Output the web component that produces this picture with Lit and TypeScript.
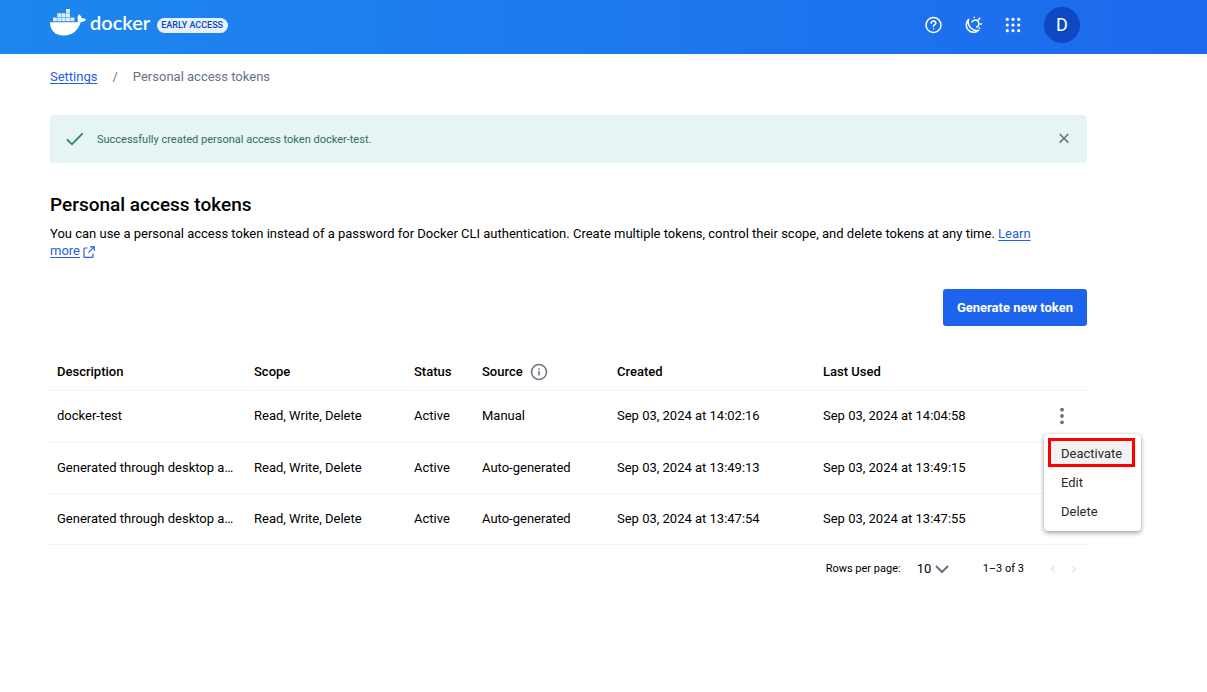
import { LitElement, html, svg, css } from "lit";
import { customElement, state, property } from "lit/decorators.js";

interface Token {
  description: string;
  source: string;
  created: string;
  lastUsed: string;
}

const TOKENS: Token[] = [
  { description: "docker-test", source: "Manual", created: "Sep 03, 2024 at 14:02:16", lastUsed: "Sep 03, 2024 at 14:04:58" },
  { description: "Generated through desktop auth", source: "Auto-generated", created: "Sep 03, 2024 at 13:49:13", lastUsed: "Sep 03, 2024 at 13:49:15" },
  { description: "Generated through desktop auth", source: "Auto-generated", created: "Sep 03, 2024 at 13:47:54", lastUsed: "Sep 03, 2024 at 13:47:55" },
];

const GRID = [4.3, 10, 15.7];

const reset = css`
  * { box-sizing: border-box; }
  button {
    font: inherit;
    color: inherit;
    background: none;
    border: 0;
    padding: 0;
    margin: 0;
    cursor: pointer;
  }
  svg { display: block; }
`;

@customElement("top-bar")
export class TopBar extends LitElement {
  static styles = [
    reset,
    css`
      :host { display: block; }
      .bar {
        display: flex;
        align-items: center;
        justify-content: space-between;
        height: 54px;
        padding: 0 127px 4px 50px;
        color: #fff;
        background: linear-gradient(90deg, #1d87ee 0%, #1d6aed 100%);
      }
      .brand { display: flex; align-items: center; }
      .home {
        display: flex;
        align-items: center;
        gap: 4px;
        color: #fff;
        text-decoration: none;
      }
      .whale { margin-bottom: 6px; }
      .word {
        font: 600 20px/24px Lato, sans-serif;
        margin-bottom: 6px;
      }
      .badge {
        margin-left: 7px;
        padding: 0 5px 0 4px;
        border-radius: 8px;
        background: #e5f2fc;
        color: #0b47bd;
        font-size: 9px;
        font-weight: 500;
        line-height: 15px;
      }
      .actions { display: flex; align-items: center; }
      .icon { margin-right: 20px; }
      .avatar {
        width: 36px;
        height: 36px;
        margin-left: 1px;
        border-radius: 50%;
        background: #0c49c2;
        font-size: 18px;
        line-height: 36px;
        text-align: center;
      }
    `,
  ];

  render() {
    return html`
      <header class="bar">
        <div class="brand">
          <a class="home" href="#" aria-label="docker">
            <svg class="whale" width="36" height="27" viewBox="0 0 36 27" fill="#fff">
              <path d="M0 13.300h25.400c1.200 0 2.300-.3 3-.8-1.200-1.900-1.300-4.900.4-7.300 1.600.9 2.700 2.300 2.900 4.200 1.500-.2 3.100 0 4.300.8-.9 1.900-2.700 2.800-5.100 2.800C27.900 21.500 22.200 26.500 14.300 26.500h-.9C5 26.500 0 21.300 0 13.300Z" />
              <path d="M16 0h4v3.800h-4zM7.300 4.200h4v3.800h-4zM11.700 4.200h3.900v3.800h-3.900zM16 4.200h4v3.800h-4zM3 8.400h3.900v3.800H3zM7.300 8.400h4v3.800h-4zM11.700 8.400h3.900v3.800h-3.900zM16 8.400h4v3.800h-4zM20.400 8.400h4v3.800h-4z" opacity=".85" />
            </svg>
            <span class="word">docker</span>
          </a>
          <span class="badge">EARLY ACCESS</span>
        </div>
        <div class="actions">
          <button class="icon" aria-label="Help">
            <svg width="20" height="20" viewBox="0 0 20 20" fill="none" stroke="#fff" stroke-width="1.500" stroke-linecap="round">
              <circle cx="10.500" cy="10" r="7.500" />
              <path d="M8.200 8.200c0-1.400 1-2.200 2.300-2.200s2.300.8 2.300 2.100c0 1.600-2.300 1.600-2.300 3.100" />
              <path d="M10.500 13.700v.1" />
            </svg>
          </button>
          <button class="icon" aria-label="Toggle theme">
            <svg width="20" height="20" viewBox="0 0 20 20" fill="none" stroke="#fff" stroke-width="1.500" stroke-linecap="round" stroke-linejoin="round">
              <path d="M5.600 4.400A7.300 7.300 0 1 0 15.900 15.300 8.700 8.700 0 0 1 5.600 4.400Z" />
              <path d="M9 6.900a3.700 3.700 0 1 1 4.700 5.200M11.200 2.300v.3M15.500 4.600l1.200-1.200M17.500 9h1M16.200 13l.4.300" />
            </svg>
          </button>
          <button class="icon" aria-label="Apps">
            <svg width="20" height="20" viewBox="0 0 20 20" fill="#fff">
              ${GRID.map((y) => GRID.map((x) => svg`<circle cx=${x} cy=${y} r="1.600" />`))}
            </svg>
          </button>
          <button class="avatar" aria-label="Account">D</button>
        </div>
      </header>
    `;
  }
}

@customElement("row-menu")
export class RowMenu extends LitElement {
  @property({ type: Boolean }) open = false;

  static styles = [
    reset,
    css`
      :host { display: block; position: relative; }
      .dots {
        display: flex;
        align-items: center;
        justify-content: center;
        width: 100%;
        height: 51px;
      }
      .menu {
        position: absolute;
        z-index: 1;
        top: 43px;
        left: 8px;
        width: 97px;
        padding: 5px;
        border-radius: 4px;
        background: #fff;
        box-shadow: 0 2px 5px rgba(0, 0, 0, 0.35), 0 0 2px rgba(0, 0, 0, 0.15);
      }
      .item {
        display: block;
        width: 100%;
        height: 29px;
        padding: 0 12px;
        border-radius: 3px;
        line-height: 29px;
        text-align: left;
        color: #2b2b2b;
      }
      .item.current { background: #f2f2f2; }
      .mark {
        position: absolute;
        top: 4px;
        left: 4px;
        right: 6px;
        height: 29px;
        border: 3px solid #f00;
        pointer-events: none;
      }
    `,
  ];

  render() {
    return html`
      <button class="dots" aria-label="Token actions" @click=${() => (this.open = !this.open)}>
        <svg width="6" height="18" viewBox="0 0 6 18" fill="#677285">
          <circle cx="3" cy="2.700" r="1.900" /><circle cx="3" cy="9" r="1.900" /><circle cx="3" cy="15.300" r="1.900" />
        </svg>
      </button>
      ${this.open
        ? html`<div class="menu" role="menu">
            <button class="item current" role="menuitem">Deactivate</button>
            <button class="item" role="menuitem">Edit</button>
            <button class="item" role="menuitem">Delete</button>
            <span class="mark"></span>
          </div>`
        : null}
    `;
  }
}

@customElement("token-table")
export class TokenTable extends LitElement {
  @state() private tokens = TOKENS;

  static styles = [
    reset,
    css`
      :host { display: block; }
      table {
        width: 100%;
        table-layout: fixed;
        border-collapse: collapse;
      }
      .c-desc { width: 197px; }
      .c-scope { width: 160px; }
      .c-status { width: 68px; }
      .c-source { width: 135px; }
      .c-created { width: 206px; }
      .c-menu { width: 51px; }
      th, td {
        padding: 0 7px;
        text-align: left;
        border-bottom: 1px solid #f2f2f4;
        white-space: nowrap;
      }
      th { height: 35px; font-weight: 500; }
      td { height: 51px; }
      .clip { overflow: hidden; text-overflow: ellipsis; }
      .source { display: flex; align-items: center; gap: 7px; }
      .menu { padding: 0; }
      .footer {
        display: flex;
        align-items: center;
        justify-content: flex-end;
        height: 48px;
        padding-right: 5px;
        font-size: 11px;
      }
      .pick { display: flex; align-items: center; margin: 0 34px 0 16px; }
      select {
        appearance: none;
        border: 0;
        padding: 0;
        margin: 0;
        background: none;
        color: inherit;
        font: inherit;
        font-size: 13px;
        width: 18px;
      }
      .step { margin-left: 5px; }
      .range { margin-right: 16px; }
    `,
  ];

  render() {
    return html`
      <table>
        <colgroup>
          <col class="c-desc" /><col class="c-scope" /><col class="c-status" /><col class="c-source" />
          <col class="c-created" /><col /><col class="c-menu" />
        </colgroup>
        <thead>
          <tr>
            <th>Description</th>
            <th>Scope</th>
            <th>Status</th>
            <th>
              <span class="source">Source
                <svg width="18" height="18" viewBox="0 0 18 18" fill="none" stroke="#677285" stroke-width="1.500">
                  <circle cx="9" cy="9" r="7.500" /><path d="M9 8v4.600M9 5.200v1.500" />
                </svg>
              </span>
            </th>
            <th>Created</th>
            <th>Last Used</th>
            <th aria-label="Actions"></th>
          </tr>
        </thead>
        <tbody>
          ${this.tokens.map(
            (t, i) => html`<tr>
              <td class="clip">${t.description}</td>
              <td>Read, Write, Delete</td>
              <td>Active</td>
              <td>${t.source}</td>
              <td>${t.created}</td>
              <td>${t.lastUsed}</td>
              <td class="menu">${i === 0 ? html`<row-menu open></row-menu>` : null}</td>
            </tr>`
          )}
        </tbody>
      </table>
      <div class="footer">
        <label for="rows">Rows per page:</label>
        <span class="pick">
          <select id="rows"><option>10</option></select>
          <svg width="14" height="10" viewBox="0 0 14 10" fill="none" stroke="#677285" stroke-width="2">
            <path d="M1 2l6 6 6-6" />
          </svg>
        </span>
        <span class="range">1–3 of 3</span>
        <button class="step" aria-label="Previous page" disabled>
          <svg width="16" height="16" viewBox="0 0 16 16" fill="none" stroke="#e1e2e6" stroke-width="1.200"><path d="M9.500 5 6.500 8l3 3" /></svg>
        </button>
        <button class="step" aria-label="Next page" disabled>
          <svg width="16" height="16" viewBox="0 0 16 16" fill="none" stroke="#e1e2e6" stroke-width="1.200"><path d="M6.500 5l3 3-3 3" /></svg>
        </button>
      </div>
    `;
  }
}

@customElement("app-root")
export class AppRoot extends LitElement {
  static styles = [
    reset,
    css`
      :host {
        display: block;
        min-height: 100vh;
        background: #fff;
        color: #000;
        font-family: Roboto, "Liberation Sans", sans-serif;
        font-size: 13px;
        line-height: 18px;
      }
      main { padding: 14px 120px 24px 50px; }
      a { color: #2560e8; text-underline-offset: 2px; }
      .crumbs { display: flex; gap: 15px; color: #677285; }
      .alert {
        display: flex;
        align-items: center;
        height: 48px;
        margin-top: 29px;
        padding: 0 16px;
        border-radius: 4px;
        background: #e6f4f3;
        color: #2e6f66;
        font-size: 11px;
        line-height: 17px;
      }
      .message { flex: 1; margin-left: 13px; }
      h1 {
        margin: 30px 0 8px;
        font-size: 19px;
        line-height: 24px;
        font-weight: 500;
      }
      .intro { margin: 0; padding-right: 32px; line-height: 17px; }
      .ext { display: inline-block; vertical-align: -3px; }
      .tools { display: flex; justify-content: flex-end; margin: 30px 0 29px; }
      .generate {
        height: 37px;
        padding: 0 14px;
        border-radius: 3px;
        background: #1d63ed;
        color: #fff;
        font-weight: 700;
      }
    `,
  ];

  render() {
    return html`
      <top-bar></top-bar>
      <main>
        <nav class="crumbs" aria-label="Breadcrumb">
          <a href="#">Settings</a><span>/</span><span>Personal access tokens</span>
        </nav>
        <div class="alert" role="status">
          <svg width="18" height="18" viewBox="0 0 18 18" fill="none" stroke="#2e7f73" stroke-width="1.800">
            <path d="M1 9.500 6 14.300 16.600 3.400" />
          </svg>
          <span class="message">Successfully created personal access token docker-test.</span>
          <button aria-label="Dismiss">
            <svg width="14" height="14" viewBox="0 0 14 14" fill="none" stroke="#677285" stroke-width="1.600">
              <path d="M2.700 2l8.600 8.600M11.300 2l-8.600 8.600" />
            </svg>
          </button>
        </div>
        <h1>Personal access tokens</h1>
        <p class="intro">
          You can use a personal access token instead of a password for Docker CLI authentication. Create multiple tokens, control their scope, and delete tokens at any time.
          <a href="#">Learn more</a>
          <svg class="ext" width="12" height="12" viewBox="0 0 12 12" fill="none" stroke="#2560e8" stroke-width="1.200">
            <path d="M4.500 2H2a1 1 0 0 0-1 1v7.400a1 1 0 0 0 1 1h7a1 1 0 0 0 1-1V7.600M7 .8h4.300v4.300M11.200.9 5.400 6.700" />
          </svg>
        </p>
        <div class="tools"><button class="generate">Generate new token</button></div>
        <token-table></token-table>
      </main>
    `;
  }
}
